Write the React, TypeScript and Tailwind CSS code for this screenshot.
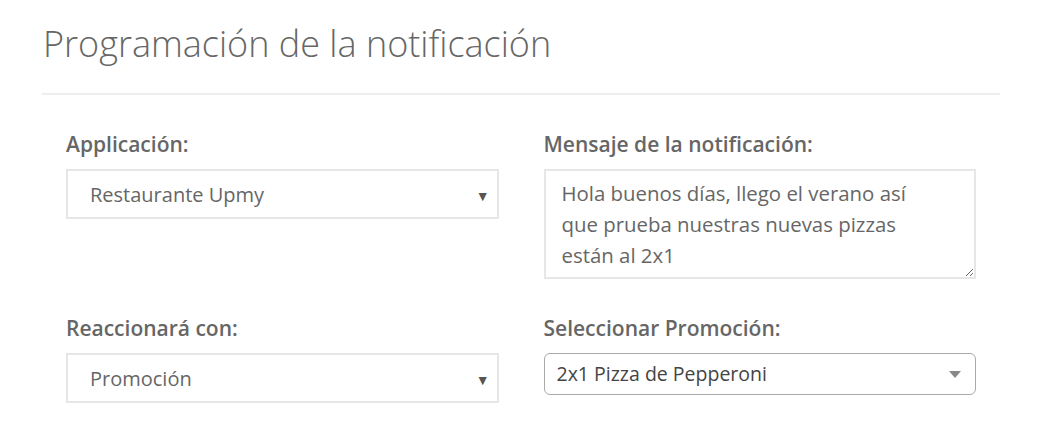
import React from "react";

const font = { fontFamily: '"Open Sans", "Noto Sans", sans-serif' };

function NativeSelect({ value }: { value: string }) {
  return (
    <div className="flex h-[50px] items-center justify-between border-2 border-[#e6e6e6] bg-white pl-[22px] pr-[7px] pt-[2px]">
      <span className="text-[20px] text-[#666]">{value}</span>
      <span className="text-[14px] text-[#555]">▼</span>
    </div>
  );
}

export default function App() {
  return (
    <div className="min-h-[447px] w-[1061px] bg-white" style={font}>
      <div className="ml-[42px] w-[958px]">
        <h1 className="pl-px pt-[22px] text-[36px] font-light leading-[44px] text-[#666]">
          Programación de la notificación
        </h1>
        <div className="mt-[27px] h-[2px] bg-[#eeeeee]" />
        <div className="grid grid-cols-2 gap-x-[45px] px-[24px] pt-[34px]">
          <div className="flex flex-col">
            <label className="h-[30px] text-[21px] font-semibold leading-[30px] text-[#666]">
              Applicación:
            </label>
            <div className="mt-[10px]">
              <NativeSelect value="Restaurante Upmy" />
            </div>
          </div>
          <div className="flex flex-col">
            <label className="h-[30px] text-[21px] font-semibold leading-[30px] text-[#666]">
              Mensaje de la notificación:
            </label>
            <div className="mt-[10px]">
              <textarea
                className="block h-[110px] w-full resize-y border-2 border-[#e6e6e6] pl-[16px] pr-[40px] pt-[7px] pb-[1px] text-[20.4px] leading-[31px] text-[#666] outline-none"
                style={font}
                defaultValue="Hola buenos días, llego el verano así que prueba nuestras nuevas pizzas están al 2x1"
              />
            </div>
          </div>
          <div className="mt-[34px] flex flex-col">
            <label className="h-[30px] text-[21px] font-semibold leading-[30px] text-[#666]">
              Reaccionará con:
            </label>
            <div className="mt-[10px]">
              <NativeSelect value="Promoción" />
            </div>
          </div>
          <div className="mt-[34px] flex flex-col">
            <label className="h-[30px] text-[21px] font-semibold leading-[30px] text-[#666]">
              Seleccionar Promoción:
            </label>
            <div className="mt-[10px]">
              <div className="flex h-[42px] items-center justify-between rounded-[6px] border-[1.5px] border-[#aaa] bg-white pl-[12px] pr-[14px]">
                <span className="text-[19.5px] text-[#444]">2x1 Pizza de Pepperoni</span>
                <span className="h-0 w-0 border-x-[6px] border-t-[7px] border-x-transparent border-t-[#888]" />
              </div>
            </div>
          </div>
        </div>
      </div>
    </div>
  );
}
